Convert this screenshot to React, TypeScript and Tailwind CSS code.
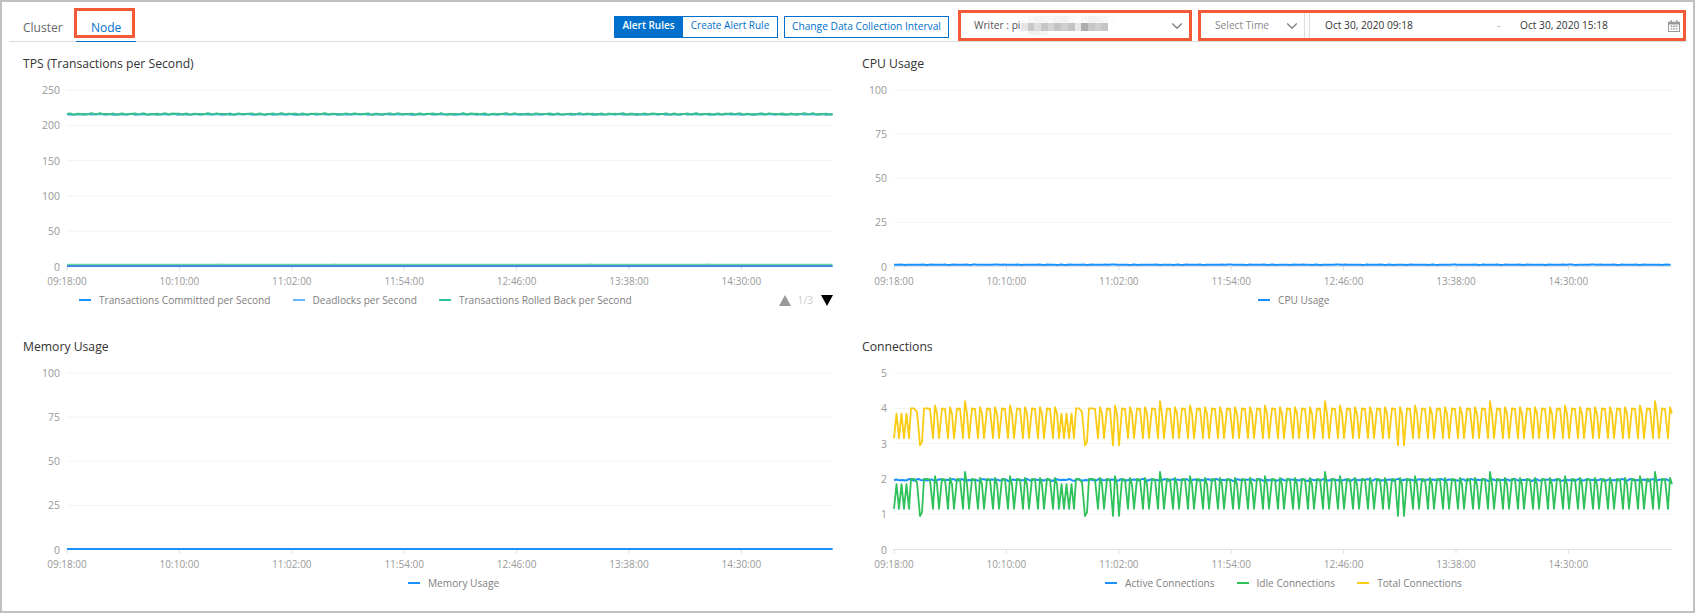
import type { ReactNode } from "react";
import { ChevronDown } from "lucide-react";

interface Series {
  color: string;
  width?: number;
  points: [number, number][];
}

interface LegendItem {
  label: string;
  color: string;
}

const TICKS = ["09:18:00", "10:10:00", "11:02:00", "11:54:00", "12:46:00", "13:38:00", "14:30:00"];
const TICK_STEP = 112.4;
const PLOT_TOP = 14;
const PLOT_HEIGHT = 176.5;

function wobble(i: number, amount: number): number {
  return (Math.sin(i * 1.3) + Math.sin(i * 0.37 + 1) * 0.4 + Math.sin(i * 1.9 + 2)) * amount * 0.4;
}

function flat(width: number, value: number, amount: number, seed = 0): [number, number][] {
  const pts: [number, number][] = [];
  for (let x = 0, i = seed; x <= width; x += 2.2, i++) {
    pts.push([x, value + wobble(i, amount)]);
  }
  return pts;
}

// connections wave: alternating wide/narrow dips, with two runs of short cycles
function wave(width: number, base: number): [number, number][] {
  const pts: [number, number][] = [[0, base + 0.15]];
  let x = 0;
  let i = 0;
  let shortDone = false;
  const push = (dx: number, v: number) => {
    x += dx;
    pts.push([x, base + v]);
  };
  const short = (n: number) => {
    for (let k = 0; k < n; k++) {
      push(2.5, 0.85);
      push(2.5, 0.15);
    }
  };
  const deepDip = () => {
    push(2, 1);
    push(3, 1);
    push(3, 0.9);
    push(3, -0.05);
    push(2, 0.05);
    push(2, 1);
  };
  short(3);
  deepDip();
  while (x < width) {
    if (x >= 162 && !shortDone) {
      shortDone = true;
      short(3);
      deepDip();
      continue;
    }
    i++;
    const peak = i % 11 === 3 ? 1.2 : i % 5 === 1 ? 1.08 : 1.03;
    const deep = i % 19 === 11;
    push(3, 1.0);
    push(3, 0.98);
    push(3, deep ? -0.05 : 0.15);
    push(2, peak);
    push(2, 0.85);
    push(2, deep ? -0.05 : 0.15);
  }
  return pts.filter((p) => p[0] <= width);
}

const tpsSeries: Series[] = [
  { color: "#66b5ff", points: flat(766, 215.4, 1, 40) },
  { color: "#35c08a", points: flat(766, 216, 1.3, 5) },
  { color: "#3f7fe8", points: flat(766, 0.6, 0) },
  { color: "#66d49a", width: 1.5, points: flat(766, 3, 0.05) },
];

const connSeries: Series[] = [
  { color: "#1890ff", points: flat(778, 1.97, 0.035, 9) },
  { color: "#2fc25b", width: 1.8, points: wave(778, 1) },
  { color: "#facc14", width: 1.8, points: wave(778, 3) },
];

function linePath(points: [number, number][], left: number, max: number): string {
  return points
    .map(([x, v], i) => {
      const y = PLOT_TOP + PLOT_HEIGHT * (1 - v / max);
      return `${i ? "L" : "M"}${(left + x).toFixed(1)} ${y.toFixed(1)}`;
    })
    .join(" ");
}

function Chart({
  left,
  right,
  yLabels,
  series,
}: {
  left: number;
  right: number;
  yLabels: number[];
  series: Series[];
}) {
  const max = yLabels[yLabels.length - 1];
  return (
    <svg width={820} height={215} className="block">
      {yLabels.map((v) => {
        const y = PLOT_TOP + PLOT_HEIGHT * (1 - v / max);
        return (
          <g key={v}>
            <line x1={left} x2={right} y1={y} y2={y} stroke={v === 0 ? "#e3e3e3" : "#f3f3f3"} strokeWidth={1} />
            <text x={left - 7} y={y + 4} textAnchor="end" fontSize={10.5} fill="#999999">
              {v}
            </text>
          </g>
        );
      })}
      {TICKS.map((t, i) => {
        const x = left + i * TICK_STEP;
        return (
          <g key={t}>
            <line x1={x} x2={x} y1={PLOT_TOP + PLOT_HEIGHT} y2={PLOT_TOP + PLOT_HEIGHT + 4} stroke="#dddddd" />
            <text x={x} y={PLOT_TOP + PLOT_HEIGHT + 18} textAnchor="middle" fontSize={10} fill="#999999">
              {t}
            </text>
          </g>
        );
      })}
      {series.map((s, i) => (
        <path
          key={i}
          d={linePath(s.points, left, max)}
          fill="none"
          stroke={s.color}
          strokeWidth={s.width ?? 2}
          strokeLinejoin="round"
        />
      ))}
    </svg>
  );
}

function Legend({ items, className }: { items: LegendItem[]; className: string }) {
  return (
    <>
      {items.map((item) => (
        <div key={item.label} className={`flex items-center gap-[8px] ${className}`}>
          <span className="h-[2px] w-[12px]" style={{ backgroundColor: item.color }} />
          <span className="text-[10.15px] text-[#808080]">{item.label}</span>
        </div>
      ))}
    </>
  );
}

function Panel({ title, children, legend }: { title: string; children: ReactNode; legend: ReactNode }) {
  return (
    <div className="flex flex-col pt-[12px] pb-[16px]">
      <div className="flex h-[20px] items-center pt-[1px] text-[12.2px] text-[#333333]">{title}</div>
      <div className="mt-[2px]">{children}</div>
      <div className="flex h-[18px] items-center pt-[1px]">{legend}</div>
    </div>
  );
}

const MOSAIC: { h: string; colors: string[] }[] = [
  {
    h: "h-[7px]",
    colors: ["#fbfbfb", "#f8f8f8", "#f4f4f4", "#f6f6f6", "#f8f8f8", "#f4f4f4", "#f2f2f2", "#f8f8f8", "#fdfdfd", "#f8f8f8", "#f2f2f2", "#f4f4f4", "#f6f6f6", "#fdfdfd", "#ffffff"],
  },
  {
    h: "h-[8px]",
    colors: ["#e6e6e6", "#c9c9c9", "#dedede", "#c6c6c6", "#d4d4d4", "#c4c4c4", "#cfcfcf", "#c4c4c4", "#e8e8e8", "#adadad", "#c6c6c6", "#d0d0d0", "#c6c6c6", "#ffffff", "#ffffff"],
  },
  {
    h: "h-[4px]",
    colors: ["#ffffff", "#f2f2f2", "#f0f0f0", "#f6f6f6", "#ffffff", "#ffffff", "#ffffff", "#ffffff", "#ffffff", "#ffffff", "#ffffff", "#ffffff", "#ffffff", "#ffffff", "#ffffff"],
  },
];

function Header() {
  return (
    <div className="relative mx-[7px] flex h-[40px] items-center border-b border-[#dcdcdc]">
      <div className="relative flex h-full items-center pl-[14px] pt-[12px] text-[12px]">
        <span className="w-[68px] text-[#666666]">Cluster</span>
        <span className="text-[#0070cc]">Node</span>
        <span className="absolute bottom-[-1px] left-[67px] h-px w-[60px] bg-[#0070cc]" />
        <span className="absolute left-[65px] top-[6px] h-[30px] w-[61px] border-[3px] border-[#f25a38]" />
      </div>
      <div className="ml-auto mb-[3px] flex h-[22px] items-stretch self-end text-[10px]">
        <span className="flex w-[69px] items-center justify-center bg-[#0070cc] pb-[4px] font-semibold text-white">Alert Rules</span>
        <span className="flex w-[95px] items-center justify-center border border-l-0 border-[#0070cc] pb-[4px] text-[#0070cc]">Create Alert Rule</span>
      </div>
      <span className="mb-[3px] ml-[6px] flex h-[22px] w-[165px] items-center justify-center self-end whitespace-nowrap border border-[#0070cc] text-[10.2px] text-[#0070cc]">
        Change Data Collection Interval
      </span>
      <div className="ml-[9px] flex h-[31px] w-[234px] items-center self-end border-[3px] border-[#f25a38] pl-[13px] pr-[3px] text-[10.2px] text-[#555555]">
        <span className="w-[47px] shrink-0 whitespace-nowrap">Writer : pi</span>
        <div className="flex flex-col">
          {MOSAIC.map((row) => (
            <div key={row.h} className="flex">
              {row.colors.map((c, i) => (
                <span key={i} className={`${row.h} w-[6.7px]`} style={{ backgroundColor: c }} />
              ))}
            </div>
          ))}
        </div>
        <ChevronDown className="ml-auto h-[18px] w-[18px] text-[#777777]" strokeWidth={1.5} />
      </div>
      <div className="ml-[6px] flex h-[31px] w-[488px] items-center self-end border-[3px] border-[#f25a38] text-[10.2px]">
        <div className="flex h-full w-[104px] items-center border-r border-[#dcdcdc] pl-[14px] pr-[3px] text-[#888888]">
          <span>Select Time</span>
          <ChevronDown className="ml-auto h-[18px] w-[18px] text-[#777777]" strokeWidth={1.5} />
        </div>
        <div className="ml-[4px] flex h-full flex-1 items-center border-l border-[#dcdcdc] pl-[15px] pr-[3px] text-[#333333]">
          <span className="w-[172px]">Oct 30, 2020 09:18</span>
          <span className="w-[23px] text-[#aaaaaa]">-</span>
          <span>Oct 30, 2020 15:18</span>
          <svg viewBox="0 0 14 14" className="ml-auto h-[12px] w-[12px] text-[#999999]" fill="currentColor">
            <path d="M3 0h1.5v2h5V0H11v2h3v12H0V2h3V0zM1.2 5.2v7.6h11.6V5.2H1.2z" />
            <path d="M3 6.5h2v1.7H3zM6 6.5h2v1.7H6zM9 6.5h2v1.7H9zM3 9.5h2v1.7H3zM6 9.5h2v1.7H6zM9 9.5h2v1.7H9z" />
          </svg>
        </div>
      </div>
    </div>
  );
}

export default function App() {
  return (
    <div
      className="h-[613px] w-[1695px] overflow-hidden border-2 border-[#c0c0c0] bg-white"
      style={{ fontFamily: '"Open Sans", "Noto Sans", sans-serif' }}
    >
      <Header />
      <div className="grid grid-cols-[839px_1fr] pl-[21px]">
        <Panel
          title="TPS (Transactions per Second)"
          legend={
            <div className="flex w-[810px] items-center pl-[56px]">
              <Legend
                className="mr-[22px]"
                items={[
                  { label: "Transactions Committed per Second", color: "#1890ff" },
                  { label: "Deadlocks per Second", color: "#66b5ff" },
                  { label: "Transactions Rolled Back per Second", color: "#2fc2a0" },
                ]}
              />
              <div className="ml-auto flex items-center text-[10.2px]">
                <span className="h-0 w-0 border-x-[6px] border-b-[11px] border-x-transparent border-b-[#999999]" />
                <span className="ml-[7px] text-[#cccccc]">1/3</span>
                <span className="ml-[8px] h-0 w-0 border-x-[6px] border-t-[11px] border-x-transparent border-t-black" />
              </div>
            </div>
          }
        >
          <Chart left={44} right={810} yLabels={[0, 50, 100, 150, 200, 250]} series={tpsSeries} />
        </Panel>
        <Panel
          title="CPU Usage"
          legend={
            <div className="flex pl-[396px]">
              <Legend items={[{ label: "CPU Usage", color: "#1890ff" }]} className="" />
            </div>
          }
        >
          <Chart
            left={32}
            right={810}
            yLabels={[0, 25, 50, 75, 100]}
            series={[{ color: "#1890ff", points: flat(778, 1, 0.12, 3) }]}
          />
        </Panel>
        <Panel
          title="Memory Usage"
          legend={
            <div className="flex pl-[385px]">
              <Legend items={[{ label: "Memory Usage", color: "#1890ff" }]} className="" />
            </div>
          }
        >
          <Chart
            left={44}
            right={810}
            yLabels={[0, 25, 50, 75, 100]}
            series={[{ color: "#1890ff", points: flat(766, 0.3, 0) }]}
          />
        </Panel>
        <Panel
          title="Connections"
          legend={
            <div className="flex pl-[243px]">
              <Legend
                className="mr-[22px]"
                items={[
                  { label: "Active Connections", color: "#1890ff" },
                  { label: "Idle Connections", color: "#2fc25b" },
                  { label: "Total Connections", color: "#facc14" },
                ]}
              />
            </div>
          }
        >
          <Chart left={32} right={810} yLabels={[0, 1, 2, 3, 4, 5]} series={connSeries} />
        </Panel>
      </div>
    </div>
  );
}
